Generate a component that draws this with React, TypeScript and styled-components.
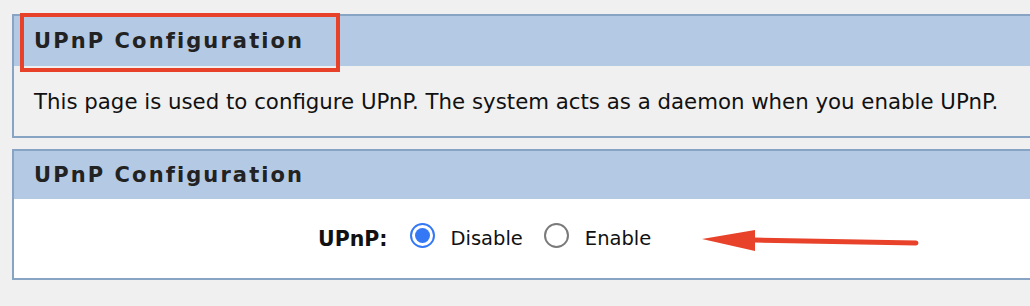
import React from 'react'
import styled, { createGlobalStyle } from 'styled-components'

const GlobalStyle = createGlobalStyle`
  html, body {
    margin: 0;
    padding: 0;
    background: #f0f0f0;
    overflow: hidden;
  }
  body {
    font-family: "DejaVu Sans", Verdana, sans-serif;
    color: #111;
  }
`

const Page = styled.div`
  position: relative;
  width: 1060px;
  padding: 14px 0 0 12px;
  display: flex;
  flex-direction: column;
  gap: 11px;
`

const Panel = styled.section<{ $white?: boolean }>`
  border: 2px solid #88a4c4;
  border-right: none;
  background: ${(p) => (p.$white ? '#ffffff' : '#f0f0f0')};
`

const Header = styled.h2<{ $height: number }>`
  margin: 0;
  height: ${(p) => p.$height}px;
  display: flex;
  align-items: center;
  padding-left: 20px;
  background: #b4c9e4;
  font-size: 21px;
  font-weight: bold;
  letter-spacing: 2.1px;
  color: #222;
`

const Description = styled.p`
  margin: 0;
  height: 70px;
  display: flex;
  align-items: center;
  padding-left: 20px;
  font-size: 21.3px;
  color: #111;
`

const FormRow = styled.div`
  height: 79px;
  display: flex;
  align-items: center;
  padding-left: 304px;
  font-size: 19.5px;
`

const FieldLabel = styled.span`
  font-weight: bold;
  font-size: 20.5px;
  margin-right: 22px;
`

const Choice = styled.label`
  display: flex;
  align-items: center;
  margin-right: 21px;
`

const Radio = styled.span<{ $checked?: boolean }>`
  width: 25px;
  height: 25px;
  box-sizing: border-box;
  border-radius: 50%;
  border: 2px solid ${(p) => (p.$checked ? '#3478f6' : '#7a7a7a')};
  margin-right: 16px;
  margin-top: -7px;
  display: flex;
  align-items: center;
  justify-content: center;
  &::after {
    content: '';
    display: ${(p) => (p.$checked ? 'block' : 'none')};
    width: 15px;
    height: 15px;
    border-radius: 50%;
    background: #3478f6;
  }
`

const Highlight = styled.div`
  position: absolute;
  left: 20px;
  top: 13px;
  width: 320px;
  height: 59px;
  box-sizing: border-box;
  border: 4px solid #e8412a;
`

const Arrow = styled.svg`
  position: absolute;
  left: 700px;
  top: 226px;
`

export default function App() {
  return (
    <>
      <GlobalStyle />
      <Page>
        <Panel>
          <Header $height={50}>UPnP Configuration</Header>
          <Description>
            This page is used to configure UPnP. The system acts as a daemon when you enable UPnP.
          </Description>
        </Panel>
        <Panel $white>
          <Header $height={48}>UPnP Configuration</Header>
          <FormRow>
            <FieldLabel>UPnP:</FieldLabel>
            <Choice>
              <Radio $checked />
              Disable
            </Choice>
            <Choice>
              <Radio />
              Enable
            </Choice>
          </FormRow>
        </Panel>
        <Highlight />
        <Arrow width="225" height="32" viewBox="0 0 225 32">
          <path d="M55 14 L216 17" stroke="#e8432a" strokeWidth="5" strokeLinecap="round" fill="none" />
          <path d="M2 13 L55 4 L55 25 Z" fill="#e8432a" />
        </Arrow>
      </Page>
    </>
  )
}
